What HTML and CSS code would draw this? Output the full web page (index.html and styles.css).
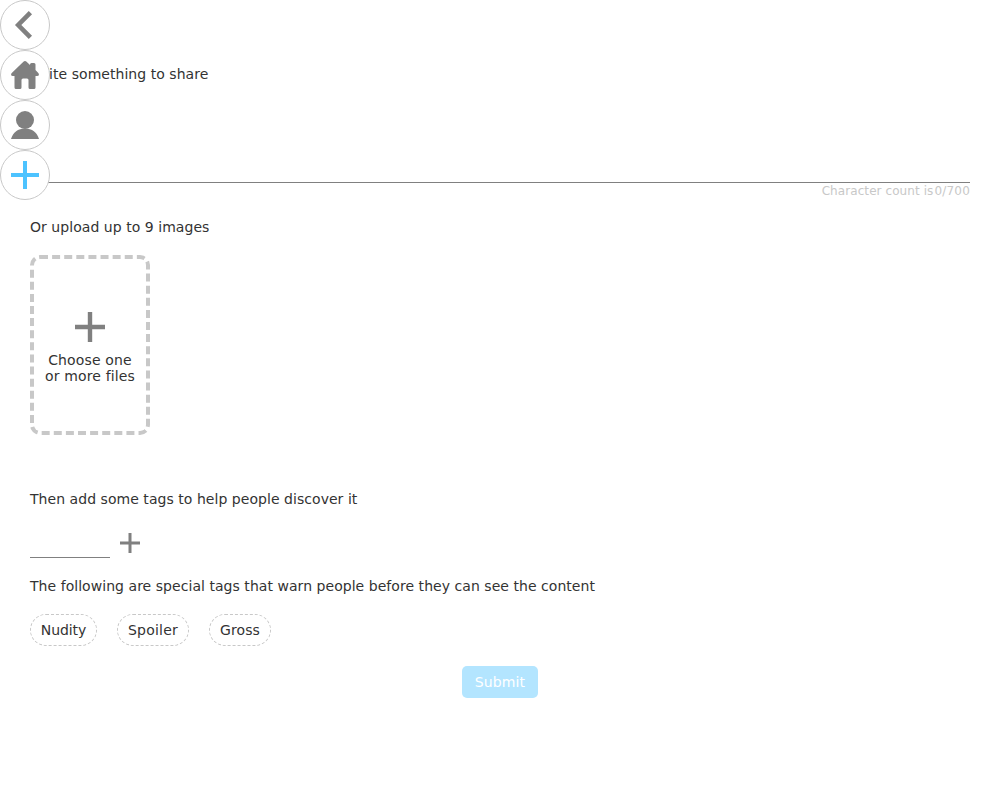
FILE: index.html
```html
<!DOCTYPE html>
<html lang="en">
<head>
<meta charset="utf-8">
<title>Create post</title>
<link rel="stylesheet" href="styles.css">
</head>
<body>
<nav class="nav">
  <a class="nav-button"><svg viewBox="0 0 28 28"><path d="M19.400 1.700 7.200 14l12.200 12.300" fill="none" stroke="#808080" stroke-width="4.600"/></svg></a>
  <a class="nav-button"><svg viewBox="0 0 28 28"><path d="M12.4.7Q14-.7 15.6.7L19 4V3.500Q19 2 20.500 2H23Q24.500 2 24.500 3.500V9L27.500 12.200Q28.800 15 26 15H24.500V26.500Q24.500 28 23 28H19Q17.500 28 17.500 26.500V19Q17.500 17.500 16 17.500H12Q10.500 17.500 10.500 19V26.500Q10.500 28 9 28H5Q3.500 28 3.500 26.500V15H2Q-.8 15 .5 12.200Z"/></svg></a>
  <a class="nav-button"><svg viewBox="0 0 28 28"><circle cx="14" cy="9" r="9"/><path d="M0 28C2 21.500 7 17.500 14 17.500S26 21.500 28 28Z"/></svg></a>
  <a class="nav-button active"><svg viewBox="0 0 28 28"><path d="M12 0h4v12h12v4H16v12h-4V16H0v-4h12Z"/></svg></a>
</nav>
<main class="form">
  <label class="label">Write something to share</label>
  <div class="message"></div>
  <div class="count"><span>Character count is</span><span class="total">0/700</span></div>
  <p class="label">Or upload up to 9 images</p>
  <div class="upload">
    <svg class="upload-icon" viewBox="0 0 30 30"><path d="M12.800 0h4.400v12.800H30v4.400H17.200V30h-4.400V17.200H0v-4.400h12.800Z"/></svg>
    <span class="upload-text">Choose one<br>or more files</span>
  </div>
  <p class="label">Then add some tags to help people discover it</p>
  <div class="tag-entry">
    <div class="tag-input"></div>
    <svg class="tag-add" viewBox="0 0 20 20"><path d="M8.500 0h3v8.500H20v3h-8.500V20h-3v-8.500H0v-3h8.500Z"/></svg>
  </div>
  <p class="label">The following are special tags that warn people before they can see the content</p>
  <div class="tags"><span class="tag nudity">Nudity</span><span class="tag spoiler">Spoiler</span><span class="tag gross">Gross</span></div>
  <button class="submit" disabled>Submit</button>
</main>
</body>
</html>
```
FILE: styles.css
```css
* { box-sizing: border-box; }
body {
  margin: 0;
  background: #fff;
  color: #333;
  font: 14px/16px "DejaVu Sans", sans-serif;
}
svg { display: block; fill: #808080; }
.nav { position: fixed; top: 0; left: 0; z-index: 1; }
.nav-button {
  display: flex;
  align-items: center;
  justify-content: center;
  width: 50px;
  height: 50px;
  border: 1px solid #c8c8c8;
  border-radius: 50%;
  background: #fff;
}
.nav-button svg { width: 28px; height: 28px; }
.active svg { fill: #4dc3ff; }
.form { display: flex; flex-direction: column; padding: 66px 30px 0; }
.label { margin: 0; letter-spacing: 0.045px; }
.message { height: 101px; border-bottom: 1px solid #808080; }
.count {
  display: flex;
  justify-content: flex-end;
  gap: 1px;
  height: 16px;
  margin-bottom: 20px;
  color: #c8c8c8;
  font-size: 12px;
  letter-spacing: 0.08px;
}
.total { letter-spacing: 0.2px; }
.upload {
  display: flex;
  flex-direction: column;
  align-items: center;
  justify-content: center;
  gap: 10px;
  width: 120px;
  height: 180px;
  margin: 20px 0 56px;
  padding-top: 6px;
  border: 4px dashed #c8c8c8;
  border-radius: 10px;
  text-align: center;
  white-space: nowrap;
}
.upload-icon { width: 30px; height: 30px; }
.upload-text { letter-spacing: 0.15px; }
.tag-entry { display: flex; align-items: center; gap: 10px; margin: 20px 0; }
.tag-input { width: 80px; height: 31px; border-bottom: 1px solid #808080; }
.tag-add { width: 20px; height: 20px; }
.tags { display: flex; gap: 20px; margin: 20px 0; }
.tag {
  height: 32px;
  padding: 7px 0;
  border: 1px dashed #c8c8c8;
  border-radius: 16px;
  text-align: center;
}
.nudity { width: 67px; letter-spacing: -0.1px; }
.spoiler { width: 72px; letter-spacing: 0.25px; }
.gross { width: 62px; letter-spacing: 0.1px; }
.submit {
  align-self: center;
  width: 76px;
  height: 32px;
  padding: 0;
  border: 0;
  border-radius: 5px;
  background: #b3e5ff;
  color: #fff;
  font: inherit;
  letter-spacing: 0.1px;
}
```
